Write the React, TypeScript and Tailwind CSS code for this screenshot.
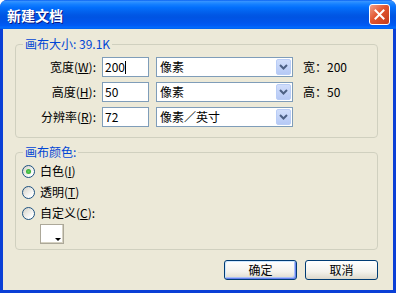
import React from 'react'

const font = "font-['Noto_Sans_CJK_SC','Liberation_Sans',sans-serif]"

function Chevron() {
  return (
    <svg width="9" height="6" viewBox="0 0 9 6">
      <path d="M1 1 L4.5 4.5 L8 1" fill="none" stroke="#4d6185" strokeWidth="2" />
    </svg>
  )
}

function Select({ value }: { value: string }) {
  return (
    <div className="w-[137px] h-[20px] border border-[#7f9db9] bg-white flex items-center">
      <span className="flex-1 pl-[3px] leading-[14px]">{value}</span>
      <span className="w-[15px] h-[16px] mr-[1px] rounded-[2px] border border-[#b9cdf6] bg-[linear-gradient(to_bottom,#d1defb,#b6c9f5)] flex items-center justify-center">
        <Chevron />
      </span>
    </div>
  )
}

function Radio({ checked, label, keyChar, colon }: { checked?: boolean; label: string; keyChar: string; colon?: boolean }) {
  return (
    <div className="h-[14px] flex items-center gap-[5px]">
      <span className="w-[13px] h-[13px] rounded-full border border-[#1c5180] bg-[linear-gradient(135deg,#d4d1c6,#ffffff_80%)] flex items-center justify-center">
        {checked && <span className="w-[5px] h-[5px] rounded-full bg-[radial-gradient(circle,#63d35f,#1f9f1f)]" />}
      </span>
      <span className="leading-[14px]">
        {label}(<span className="underline">{keyChar}</span>){colon ? ':' : ''}
      </span>
    </div>
  )
}

const rows = [
  { label: '宽度', key: 'W', value: '200', unit: '像素', info: '宽：200', cursor: true },
  { label: '高度', key: 'H', value: '50', unit: '像素', info: '高：50' },
  { label: '分辨率', key: 'R', value: '72', unit: '像素／英寸', info: '' },
]

export default function App() {
  return (
    <div className={`w-[396px] h-[293px] flex flex-col rounded-t-[7px] overflow-hidden bg-[#0a3fd6] text-[12px] text-black ${font}`}>
      {/* Title bar */}
      <div className="h-[29px] shrink-0 flex items-center justify-between pl-[7px] pr-[6px] bg-[linear-gradient(to_bottom,#0058ee_0%,#3a93ff_4%,#288eff_8%,#127dff_16%,#036ffc_26%,#0262ee_40%,#0057e5_52%,#0054e3_60%,#0055eb_76%,#005bf5_88%,#026afe_94%,#0062ef_100%)]">
        <span className="text-white font-bold text-[14px] leading-[16px] [text-shadow:1px_1px_#0a1883]">新建文档</span>
        <button className="w-[21px] h-[21px] rounded-[3px] border border-white bg-[linear-gradient(135deg,#f0a08a,#e2552f_45%,#c23b1c)] flex items-center justify-center">
          <svg width="11" height="11" viewBox="0 0 11 11">
            <path d="M1.5 1.5 L9.5 9.5 M9.5 1.5 L1.5 9.5" stroke="#fff" strokeWidth="2" strokeLinecap="square" />
          </svg>
        </button>
      </div>

      {/* Body */}
      <div className="flex-1 min-h-0 mx-[3px] mb-[3px] bg-[#ece9d8] pl-[12px] pt-[8px] flex flex-col">
        {/* Canvas size */}
        <fieldset className="w-[363px] border border-[#d0d0bf] rounded-[4px] p-0 m-0">
          <legend className="ml-[7px] px-[2px] leading-[14px] text-[#0046d5]">画布大小: 39.1K</legend>
          <div className="pt-[6px] pb-[10px] flex flex-col gap-[5px]">
            {rows.map((r) => (
              <div key={r.key} className="h-[20px] grid grid-cols-[80px_47px_137px_auto] gap-x-[6px] items-center">
                <span className="text-right leading-[14px]">
                  {r.label}(<span className="underline">{r.key}</span>):
                </span>
                <div className="h-[20px] border border-[#7f9db9] bg-white flex items-center pl-[2px] leading-[14px]">
                  {r.value}
                  {r.cursor && <span className="w-px h-[13px] bg-black" />}
                </div>
                <div className="ml-[1px]">
                  <Select value={r.unit} />
                </div>
                <span className="ml-[5px] leading-[14px]">{r.info}</span>
              </div>
            ))}
          </div>
        </fieldset>

        {/* Canvas colour */}
        <fieldset className="mt-[7px] w-[363px] border border-[#d0d0bf] rounded-[4px] p-0 m-0">
          <legend className="ml-[7px] px-[2px] leading-[14px] text-[#0046d5]">画布颜色:</legend>
          <div className="pt-[5px] pb-[4px] pl-[6px] flex flex-col gap-[7px]">
            <Radio checked label="白色" keyChar="I" />
            <Radio label="透明" keyChar="T" />
            <Radio label="自定义" keyChar="C" colon />
          </div>
          <div className="ml-[24px] mb-[5px] relative w-[24px] h-[20px] border border-[#aca899] bg-white shadow-[inset_-1px_-1px_0_#d6d2c2]">
            <span className="absolute right-[2px] bottom-[2px] w-0 h-0 border-l-[3px] border-r-[3px] border-t-[3px] border-l-transparent border-r-transparent border-t-black" />
          </div>
        </fieldset>

        {/* Buttons */}
        <div className="mt-[10px] w-[363px] flex justify-end gap-[8px]">
          <button className="w-[73px] h-[20px] rounded-[3px] border border-[#003c74] bg-[linear-gradient(to_bottom,#ffffff,#f3f2ec_60%,#dcd8cb)] shadow-[inset_1px_1px_0_#cee7ff,inset_-1px_-1px_0_#6982ee,inset_-2px_-2px_0_#a8c0f7] leading-[14px]">
            确定
          </button>
          <button className="w-[73px] h-[20px] rounded-[3px] border border-[#003c74] bg-[linear-gradient(to_bottom,#ffffff,#f3f2ec_60%,#dcd8cb)] leading-[14px]">
            取消
          </button>
        </div>
      </div>
    </div>
  )
}
